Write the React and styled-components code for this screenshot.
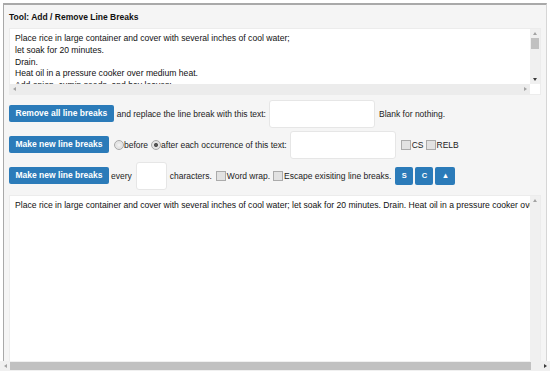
import React from 'react';
import styled, {createGlobalStyle} from 'styled-components';

const GlobalStyle = createGlobalStyle`
    html, body {
        margin: 0;
        padding: 0;
        background: #ffffff;
        font-family: "Liberation Sans", Arial, sans-serif;
        overflow: hidden;
    }
`;

const Page = styled.div`
    padding: 3px 0 0 3px;
`;

const Panel = styled.div`
    width: 532px;
    background: #f5f5f5;
    border: 1px solid #d6d6d6;
    border-top: 2px solid #a9a9a9;
    border-left: 1px solid #a9a9a9;
    padding: 6px 5px 0 5px;
    height: 400px;
`;

const Title = styled.div`
    font-size: 8.5px;
    font-weight: bold;
    color: #111;
    line-height: 12px;
    margin: 0 0 5px 0;
`;

/* textarea with a drawn scrollbar beside it */
const Frame = styled.div`
    display: grid;
    grid-template-columns: 1fr 10px;
    grid-template-rows: ${p => p.hbar ? '1fr 10px' : '1fr'};
    height: ${p => p.h}px;
    box-sizing: border-box;
    border: 1px solid #ececec;
    background: #fff;
    overflow: hidden;
`;

const TextBox = styled.textarea`
    display: block;
    box-sizing: border-box;
    width: 100%;
    height: 100%;
    min-height: 0;
    margin: 0;
    padding: 4px 5px 0 5px;
    border: none;
    background: #fff;
    font-family: "Liberation Sans", Arial, sans-serif;
    font-size: 8.6px;
    line-height: 11.8px;
    color: #111;
    resize: none;
    white-space: pre;
    overflow: hidden;
    outline: none;
`;

const VBar = styled.div`
    display: flex;
    flex-direction: column;
    background: #f0f0f0;
`;

const HBar = styled.div`
    display: flex;
    background: ${p => p.bg || '#f0f0f0'};
`;

const Corner = styled.div`
    background: #fff;
`;

const ArrowBox = styled.div`
    flex: 0 0 ${p => p.size || 9}px;
    display: flex;
    align-items: center;
    justify-content: center;
`;

const Tri = styled.span`
    width: 0;
    height: 0;
    border-style: solid;
    ${p => p.dir === 'up' && `border-width: 0 2.5px 3px 2.5px; border-color: transparent transparent ${p.c} transparent;`}
    ${p => p.dir === 'down' && `border-width: 3px 2.5px 0 2.5px; border-color: ${p.c} transparent transparent transparent;`}
    ${p => p.dir === 'left' && `border-width: 2.5px 3px 2.5px 0; border-color: transparent ${p.c} transparent transparent;`}
    ${p => p.dir === 'right' && `border-width: 2.5px 0 2.5px 3px; border-color: transparent transparent transparent ${p.c};`}
`;

const Track = styled.div`
    flex: 1;
    display: flex;
    flex-direction: ${p => p.vertical ? 'column' : 'row'};
`;

const Thumb = styled.div`
    background: #c1c1c1;
    ${p => p.vertical
        ? `height: ${p.len}px; margin: 0 1px;`
        : `width: ${p.len}px; margin: 1px 0;`}
`;

const PageBar = styled.div`
    position: fixed;
    left: 0;
    right: 0;
    bottom: 0;
    height: 10px;
    display: flex;
    background: #f0f0f0;
`;

const Controls = styled.div`
    display: flex;
    flex-direction: column;
    gap: 4px;
    margin: 5px 0 6px 0;
`;

const Row = styled.div`
    display: flex;
    align-items: center;
    height: 27px;
    font-size: 8.5px;
    color: #222;
`;

const Button = styled.button`
    background: #2b7bb9;
    color: #fff;
    border: none;
    border-radius: 2px;
    font-family: "Liberation Sans", Arial, sans-serif;
    font-size: 8.5px;
    font-weight: bold;
    height: 17px;
    padding: 0 ${p => p.pad || 6.5}px;
    margin-right: ${p => p.mr || 2}px;
    line-height: 17px;
    white-space: nowrap;
    cursor: pointer;
`;

const SmallButton = styled(Button)`
    width: ${p => p.w}px;
    height: 18px;
    padding: 0;
    font-size: 7.5px;
    margin: 0 2px 0 0;
    text-align: center;
`;

const Label = styled.span`
    margin-right: ${p => p.mr || 0}px;
    margin-left: ${p => p.ml || 0}px;
    white-space: nowrap;
`;

const Field = styled.input`
    box-sizing: border-box;
    width: ${p => p.w}px;
    height: 28px;
    background: #fff;
    border: 1px solid #e6e6e6;
    border-radius: 3px;
    margin: 0 ${p => p.mr || 3}px 0 ${p => p.ml || 3}px;
    outline: none;
`;

const Radio = styled.span`
    display: inline-block;
    flex: none;
    box-sizing: border-box;
    width: 10px;
    height: 10px;
    border-radius: 50%;
    border: 1px solid #a8a8a8;
    background: radial-gradient(circle, ${p => p.checked ? '#555 0 1.8px' : 'transparent 0 0'}, #e4e4e4 2.3px);
    margin: 0 0 0 ${p => p.ml || 0}px;
`;

const Check = styled.span`
    display: inline-block;
    flex: none;
    box-sizing: border-box;
    width: 10px;
    height: 10px;
    border: 1px solid #ababab;
    background: #e2e2e2;
    margin: 0 1px 0 ${p => p.ml || 0}px;
`;

const recipe = [
    'Place rice in large container and cover with several inches of cool water;',
    'let soak for 20 minutes.',
    'Drain.',
    'Heat oil in a pressure cooker over medium heat.',
    'Add onion, cumin seeds, and bay leaves;',
    'cook and stir until onion is translucent, about 5 minutes.',
    'Stir ginger-garlic paste into onion mixture;',
    'cook and stir until fragrant, about 1 minute.',
    'Add tomatoes and green chile peppers;',
    'cook and stir until tomatoes are softened, about 3 minutes.',
    'Stir mint leaves, coriander leaves, salt, red chile powder,',
    'garam masala, and turmeric into tomato mixture;',
    'cook until fragrant, about 1 minute.',
    'Pour water into the pressure cooker.',
    'Stir rice into boiling liquid;',
    'cook and stir for 1 minute.',
    'Serve hot.',
];

const light = '#a3a3a3';
const dark = '#3c3c3c';

const App = () => {
    return (
        <Page>
            <GlobalStyle/>
            <Panel>
                <Title>Tool: Add / Remove Line Breaks</Title>
                <Frame h={67} hbar>
                    <TextBox wrap="off" defaultValue={recipe.join('\n')} />
                    <VBar>
                        <ArrowBox><Tri dir="up" c={light} /></ArrowBox>
                        <Track vertical>
                            <Thumb vertical len={11} />
                        </Track>
                        <ArrowBox><Tri dir="down" c={dark} /></ArrowBox>
                    </VBar>
                    <HBar bg="#ececec">
                        <ArrowBox><Tri dir="left" c={light} /></ArrowBox>
                        <Track />
                        <ArrowBox><Tri dir="right" c={light} /></ArrowBox>
                    </HBar>
                    <Corner />
                </Frame>
                <Controls>
                    <Row>
                        <Button mr={3}>Remove all line breaks</Button>
                        <Label>and replace the line break with this text:</Label>
                        <Field w={106} ml={3} mr={4} />
                        <Label>Blank for nothing.</Label>
                    </Row>
                    <Row>
                        <Button mr={5}>Make new line breaks</Button>
                        <Radio />
                        <Label>before</Label>
                        <Radio checked ml={3} />
                        <Label>after each occurrence of this text:</Label>
                        <Field w={106} ml={3} mr={5} />
                        <Check />
                        <Label mr={2}>CS</Label>
                        <Check />
                        <Label>RELB</Label>
                    </Row>
                    <Row>
                        <Button mr={2}>Make new line breaks</Button>
                        <Label>every</Label>
                        <Field w={31} ml={4} mr={3} />
                        <Label mr={4}>characters.</Label>
                        <Check />
                        <Label mr={3}>Word wrap.</Label>
                        <Check />
                        <Label mr={4}>Escape exisiting line breaks.</Label>
                        <SmallButton w={18}>S</SmallButton>
                        <SmallButton w={18}>C</SmallButton>
                        <SmallButton w={20}>▲</SmallButton>
                    </Row>
                </Controls>
                <Frame h={190}>
                    <TextBox wrap="off" defaultValue={recipe.join(' ')} />
                    <VBar>
                        <ArrowBox><Tri dir="up" c={light} /></ArrowBox>
                        <Track vertical />
                    </VBar>
                </Frame>
            </Panel>
            <PageBar>
                <ArrowBox size={10}><Tri dir="left" c={light} /></ArrowBox>
                <Track>
                    <Thumb len={521} />
                </Track>
                <ArrowBox size={10}><Tri dir="right" c={dark} /></ArrowBox>
            </PageBar>
        </Page>
    );
};

export default App;
